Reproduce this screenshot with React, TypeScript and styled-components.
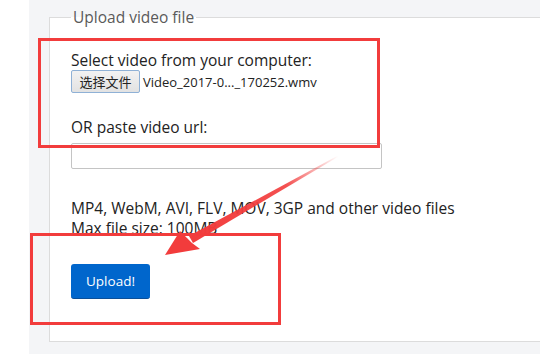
import React from "react";
import styled, { createGlobalStyle } from "styled-components";

const GlobalStyle = createGlobalStyle`
  html, body { margin: 0; padding: 0; background: #ffffff; }
  body { font-family: "Open Sans", "Noto Sans", sans-serif; color: #222; }
`;

const Page = styled.div`
  position: relative;
  display: flex;
  width: 540px;
  height: 354px;
  overflow: hidden;
`;

const Gutter = styled.div`
  width: 29px;
  flex: none;
  background: #ffffff;
`;

const Main = styled.main`
  flex: 1;
  background: #f4f5f7;
  padding: 7px 0 0 20px;
  overflow: hidden;
`;

const Fieldset = styled.fieldset`
  box-sizing: border-box;
  width: 560px;
  height: 335px;
  margin: 0;
  padding: 0 0 0 21px;
  border: 1px solid #dcdcdc;
  background: #ffffff;
  display: flex;
  flex-direction: column;
  align-items: flex-start;
`;

const Legend = styled.legend`
  padding: 0 2px;
  font-size: 15.5px;
  line-height: 20px;
  color: #5a5a5a;
`;

const Label = styled.div<{ $top: number }>`
  margin-top: ${(p) => p.$top}px;
  font-size: 15.5px;
  line-height: 20px;
  color: #222;
`;

const FileRow = styled.div`
  display: flex;
  align-items: center;
  gap: 3px;
  height: 23px;
`;

const FileButton = styled.button`
  box-sizing: border-box;
  height: 23px;
  width: 69px;
  padding: 0;
  border: 1px solid #8fb1d6;
  border-radius: 2px;
  background: linear-gradient(#f2f2f2, #e2e2e2);
  font-family: "Noto Sans CJK SC", sans-serif;
  font-size: 13px;
  color: #222;
`;

const FileName = styled.span`
  font-family: "Open Sans", sans-serif;
  font-size: 13px;
  color: #222;
`;

const UrlInput = styled.input`
  box-sizing: border-box;
  margin-top: 6px;
  width: 311px;
  height: 26px;
  border: 1px solid #c4c4c4;
  border-radius: 2px;
  background: #fff;
`;

const Info = styled.div`
  margin-top: 30px;
  display: flex;
  flex-direction: column;
`;

const InfoLine = styled.span`
  font-size: 15.5px;
  line-height: 19.5px;
  color: #222;
`;

const UploadButton = styled.button`
  box-sizing: border-box;
  margin-top: 26px;
  width: 79px;
  height: 35px;
  border: none;
  border-bottom: 1px solid #0a4f99;
  border-radius: 3px;
  background: #0066cc;
  color: #ffffff;
  font-family: "Open Sans", sans-serif;
  font-size: 13.5px;
  padding: 0;
`;

const Overlay = styled.svg`
  position: absolute;
  left: 0;
  top: 0;
  pointer-events: none;
`;

export default function App() {
  return (
    <>
      <GlobalStyle />
      <Page>
        <Gutter />
        <Main>
          <Fieldset>
            <Legend>Upload video file</Legend>
            <Label $top={23}>Select video from your computer:</Label>
            <FileRow>
              <FileButton type="button">选择文件</FileButton>
              <FileName>Video_2017-0..._170252.wmv</FileName>
            </FileRow>
            <Label $top={24}>OR paste video url:</Label>
            <UrlInput type="text" />
            <Info>
              <InfoLine>MP4, WebM, AVI, FLV, MOV, 3GP and other video files</InfoLine>
              <InfoLine>Max file size: 100MB</InfoLine>
            </Info>
            <UploadButton type="button">Upload!</UploadButton>
          </Fieldset>
        </Main>
        <Overlay width={540} height={354} viewBox="0 0 540 354">
          <defs>
            <linearGradient id="shaft" x1="338" y1="156" x2="190" y2="241" gradientUnits="userSpaceOnUse">
              <stop offset="0" stopColor="#f23c3c" stopOpacity="0" />
              <stop offset="0.35" stopColor="#f23c3c" stopOpacity="0.9" />
              <stop offset="1" stopColor="#f23c3c" />
            </linearGradient>
          </defs>
          <rect x={39.5} y={39.5} width={339} height={107} fill="none" stroke="#f23c3c" strokeWidth={3} />
          <rect x={31.5} y={234.5} width={248} height={89} fill="none" stroke="#f23c3c" strokeWidth={3} />
          <polygon points="338,155.5 338.6,156.5 193,243 189,236" fill="url(#shaft)" />
          <polygon points="165,255 180,231 187,238 192,243 200,249" fill="#f23c3c" />
        </Overlay>
      </Page>
    </>
  );
}
